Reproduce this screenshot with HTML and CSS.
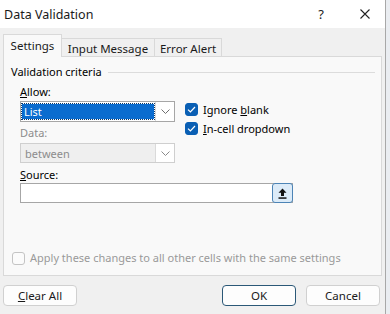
FILE: index.html
```html
<!DOCTYPE html>
<html lang="en">
<head>
  <meta charset="UTF-8">
  <title>Data Validation</title>
  <link rel="stylesheet" href="styles.css">
</head>
<body>
  <div class="window">
    <div class="dialog">
      <div class="titlebar">
        <span class="title">Data Validation</span>
        <span class="help">?</span>
        <span class="close">
          <svg width="10" height="10" viewBox="0 0 10 10"><path d="M0.5 0.5 L9.5 9.5 M9.5 0.5 L0.5 9.5" stroke="#222" stroke-width="1.1" fill="none"/></svg>
        </span>
      </div>

      <div class="tabs">
        <div class="tab tab-settings active">Settings</div>
        <div class="tab tab-input">Input Message</div>
        <div class="tab tab-error">Error Alert</div>
      </div>

      <div class="panel">
        <div class="group-label"><span>Validation criteria</span><div class="rule"></div></div>

        <div class="criteria">
          <div class="fields">
            <div class="label label-allow"><u>A</u>llow:</div>
            <div class="select">
              <div class="select-value"><span class="highlight">List</span></div>
              <div class="select-arrow">
                <svg width="9" height="5" viewBox="0 0 9 5"><path d="M0.5 0.5 L4.5 4.5 L8.5 0.5" stroke="#6d6d6d" fill="none"/></svg>
              </div>
            </div>
            <div class="label label-data disabled">Data:</div>
            <div class="select select-disabled">
              <div class="select-value">between</div>
              <div class="select-arrow">
                <svg width="9" height="5" viewBox="0 0 9 5"><path d="M0.5 0.5 L4.5 4.5 L8.5 0.5" stroke="#8a8a8a" fill="none"/></svg>
              </div>
            </div>
          </div>

          <div class="options">
            <div class="check-row">
              <span class="checkbox checked">
                <svg width="9" height="7" viewBox="0 0 9 7"><path d="M1 3.6 L3.4 6 L8 1" stroke="#fff" stroke-width="1.2" fill="none"/></svg>
              </span>
              <span>Ignore <u>b</u>lank</span>
            </div>
            <div class="check-row">
              <span class="checkbox checked">
                <svg width="9" height="7" viewBox="0 0 9 7"><path d="M1 3.6 L3.4 6 L8 1" stroke="#fff" stroke-width="1.2" fill="none"/></svg>
              </span>
              <span><u>I</u>n-cell dropdown</span>
            </div>
          </div>
        </div>

        <div class="source-block">
          <div class="label label-source"><u>S</u>ource:</div>
          <div class="source">
            <div class="source-field"></div>
            <div class="source-btn">
              <svg width="9" height="11" viewBox="0 0 9 11"><path d="M4.5 0.5 L0.5 4.8 L3 4.8 L3 8 L6 8 L6 4.8 L8.5 4.8 Z" fill="#111"/><rect x="0.5" y="9.3" width="8" height="1.5" fill="#111"/></svg>
            </div>
          </div>
        </div>

        <div class="apply">
          <span class="checkbox"></span>
          <span>Apply these changes to all other cells with the same settings</span>
        </div>
      </div>

      <div class="footer">
        <button class="btn"><u>C</u>lear All</button>
        <div class="spacer"></div>
        <button class="btn btn-default">OK</button>
        <button class="btn">Cancel</button>
      </div>
    </div>
    <div class="sheet-edge"></div>
  </div>
</body>
</html>
```

FILE: styles.css
```css
body {
  margin: 0;
  font-family: 'Noto Sans', 'Open Sans', sans-serif;
  font-size: 11px;
  color: #000;
  background: #fff;
}

.window {
  display: flex;
  width: 390px;
  height: 314px;
  overflow: hidden;
}

.dialog {
  width: 386px;
  box-sizing: border-box;
  background-color: #f0f0f0;
  border-right: 1px solid #a8a8a8;
  display: flex;
  flex-direction: column;
}

.sheet-edge {
  flex: 1;
  background-color: #eaedf1;
}

/* title bar */

.titlebar {
  height: 28px;
  background-color: #fff;
  display: flex;
  align-items: center;
  padding-left: 4px;
}

.title {
  flex: 1;
  font-size: 12.5px;
  color: #1a1a1a;
}

.help {
  width: 48px;
  text-align: center;
  font-size: 13px;
  color: #222;
}

.close {
  width: 40px;
  display: flex;
  justify-content: center;
}

/* tabs */

.tabs {
  display: flex;
  align-items: flex-end;
  height: 22px;
  margin: 7px 0 -1px 3px;
  position: relative;
  z-index: 1;
}

.tab {
  height: 19px;
  box-sizing: border-box;
  border: 1px solid #d9d9d9;
  border-left: none;
  border-bottom: none;
  display: flex;
  align-items: center;
  justify-content: center;
  color: #1a1a1a;
  font-size: 11.5px;
}

.tab.active {
  height: 23px;
  border-left: 1px solid #d9d9d9;
  background-color: #f9f9f9;
  padding-bottom: 1px;
}

.tab-settings { width: 59px; }
.tab-input { width: 93px; }
.tab-error { width: 67px; }

/* settings panel */

.panel {
  margin-left: 3px;
  width: 379px;
  height: 220px;
  box-sizing: border-box;
  border: 1px solid #d9d9d9;
  background-color: #f9f9f9;
  padding: 7px 6px 0 7px;
}

.group-label {
  display: flex;
  align-items: center;
  gap: 6px;
  line-height: 16px;
}

.rule {
  flex: 1;
  height: 1px;
  background-color: #dcdcdc;
}

.criteria {
  display: flex;
  gap: 10px;
  padding-left: 9px;
}

.label {
  line-height: 16px;
}

.label.disabled {
  color: #8c8c8c;
}

.label-allow { margin-top: 4px; }
.label-data { margin-top: 3px; }

.select {
  width: 155px;
  height: 21px;
  box-sizing: border-box;
  border: 1px solid #a6a6a6;
  background-color: #fff;
  display: flex;
  margin-top: 1px;
}

.select-value {
  flex: 1;
  display: flex;
  align-items: center;
  padding: 2px 1px;
}

.highlight {
  flex: 1;
  align-self: stretch;
  display: flex;
  align-items: center;
  padding-left: 2px;
  background-color: #0a6ccf;
  color: #fff;
  outline: 1px dotted #0d3a6a;
}

.select-arrow {
  width: 18px;
  display: flex;
  align-items: center;
  justify-content: center;
  border-left: 1px solid #dadada;
  background-color: #fff;
}

.select-disabled {
  height: 20px;
  margin-top: 2px;
  border-color: #cfcfcf;
  background-color: #efefef;
}

.select-disabled .select-value {
  padding-left: 4px;
  color: #8c8c8c;
}

.options {
  margin-top: 20px;
}

.check-row {
  height: 19px;
  display: flex;
  align-items: center;
  gap: 5px;
}

.checkbox {
  width: 13px;
  height: 13px;
  box-sizing: border-box;
  border: 1px solid #c4c4c4;
  border-radius: 3px;
  background-color: #fbfbfb;
  display: inline-flex;
  align-items: center;
  justify-content: center;
}

.checkbox.checked {
  border-color: #0a5fb4;
  background-color: #0a5fb4;
}

.source-block {
  padding-left: 9px;
}

.label-source { margin-top: 4px; }

.source {
  width: 273px;
  height: 20px;
  box-sizing: border-box;
  border: 1px solid #a6a6a6;
  background-color: #fff;
  display: flex;
}

.source-field {
  flex: 1;
}

.source-btn {
  width: 21px;
  margin: -1px -1px -1px 0;
  box-sizing: border-box;
  border: 1px solid #4d84b6;
  border-radius: 3px;
  background-color: #dcebf8;
  display: flex;
  align-items: center;
  justify-content: center;
}

.apply {
  margin-top: 47px;
  line-height: 16px;
  display: flex;
  align-items: center;
  gap: 5px;
  color: #9a9a9a;
  padding-left: 1px;
}

/* footer buttons */

.footer {
  display: flex;
  gap: 10px;
  margin-top: 9px;
  padding: 0 5px 0 3px;
}

.spacer {
  flex: 1;
}

.btn {
  width: 74px;
  height: 21px;
  font-family: inherit;
  font-size: 11.5px;
  color: #1a1a1a;
  background-color: #fdfdfd;
  border: 1px solid #d0d0d0;
  border-radius: 4px;
  padding: 0;
}

.btn-default {
  border-color: #2b5877;
}
```
